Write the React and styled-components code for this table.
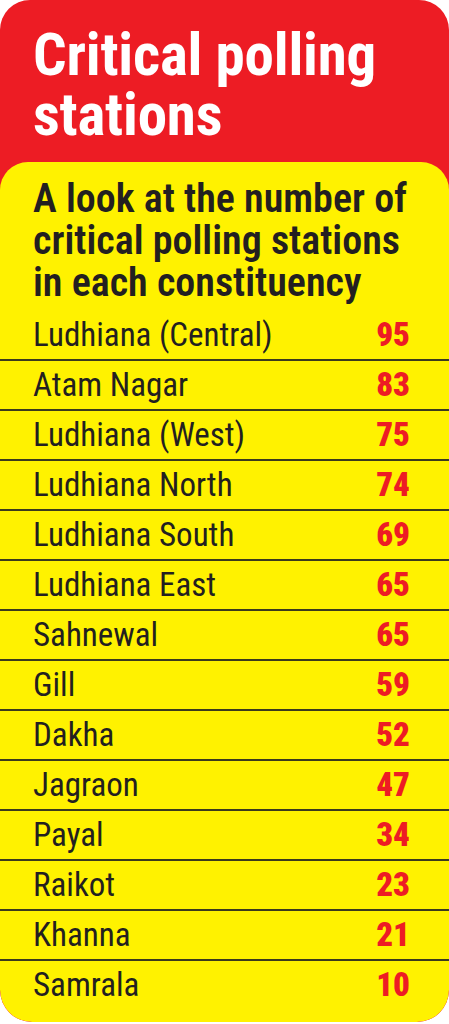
import React from "react";
import styled, { createGlobalStyle } from "styled-components";

const GlobalStyle = createGlobalStyle`
  html, body { margin: 0; padding: 0; background: #ffffff; }
  body { font-family: "Roboto Condensed", "Roboto", sans-serif; }
`;

const Card = styled.div`
  width: 449px;
  height: 1022px;
  background: #ed1c24;
  border-radius: 30px 30px 32px 32px;
  overflow: hidden;
  display: flex;
  flex-direction: column;
`;

const Title = styled.h1`
  margin: 0;
  padding: 25px 20px 17px 33px;
  font-family: "Roboto Condensed", "Roboto", sans-serif;
  font-weight: 700;
  font-size: 59px;
  line-height: 60px;
  color: #ffffff;
  letter-spacing: -0.2px;
`;

const Panel = styled.div`
  flex: 1;
  background: #fff200;
  border-radius: 28px 28px 32px 32px;
  padding: 16px 0 0 0;
  display: flex;
  flex-direction: column;
`;

const Subtitle = styled.h2`
  margin: 0 0 7px 0;
  padding: 0 20px 0 33px;
  font-family: "Roboto Condensed", "Roboto", sans-serif;
  font-weight: 600;
  font-size: 40px;
  line-height: 42px;
  color: #231f20;
`;

const List = styled.ul`
  list-style: none;
  margin: 0;
  padding: 0;
`;

const Row = styled.li`
  height: 48px;
  display: flex;
  align-items: center;
  justify-content: space-between;
  padding: 0 39px 2px 33px;
  box-sizing: border-box;
  & + & {
    height: 50px;
    border-top: 2px solid #3b3a1c;
  }
`;

const Name = styled.span`
  font-family: "Roboto Condensed", "Roboto", sans-serif;
  font-weight: 400;
  font-size: 33px;
  color: #231f20;
`;

const Count = styled.span`
  font-family: "Roboto Condensed", "Roboto", sans-serif;
  font-weight: 900;
  font-size: 33px;
  color: #ed1c24;
`;

const data = [
  ["Ludhiana (Central)", 95],
  ["Atam Nagar", 83],
  ["Ludhiana (West)", 75],
  ["Ludhiana North", 74],
  ["Ludhiana South", 69],
  ["Ludhiana East", 65],
  ["Sahnewal", 65],
  ["Gill", 59],
  ["Dakha", 52],
  ["Jagraon", 47],
  ["Payal", 34],
  ["Raikot", 23],
  ["Khanna", 21],
  ["Samrala", 10],
];

export default function App() {
  return (
    <>
      <GlobalStyle />
      <Card>
        <Title>
          Critical polling
          <br />
          stations
        </Title>
        <Panel>
          <Subtitle>
            A look at the number of
            <br />
            critical polling stations
            <br />
            in each constituency
          </Subtitle>
          <List>
            {data.map(([name, n]) => (
              <Row key={name}>
                <Name>{name}</Name>
                <Count>{n}</Count>
              </Row>
            ))}
          </List>
        </Panel>
      </Card>
    </>
  );
}
